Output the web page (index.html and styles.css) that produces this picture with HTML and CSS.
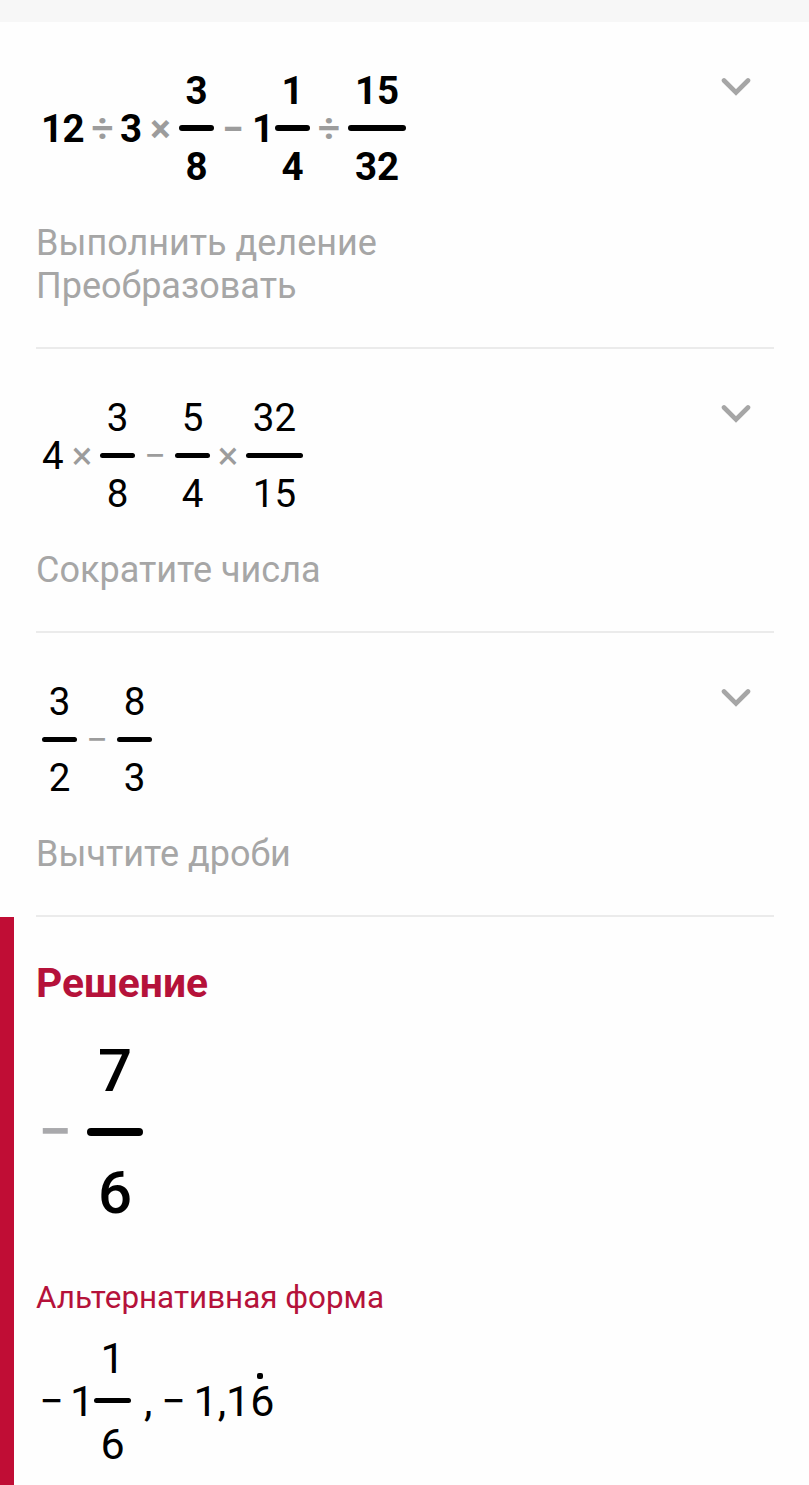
FILE: index.html
```html
<!DOCTYPE html>
<html lang="ru">
<head>
    <meta charset="UTF-8">
    <title>Решение</title>
    <link rel="stylesheet" href="styles.css">
</head>
<body>
    <div class="top-bar"></div>
    <div class="steps">
        <div class="step">
            <div class="step-head">
                <div class="math bold">
                    <span class="num first">12</span>
                    <span class="op div">÷</span>
                    <span class="num">3</span>
                    <span class="op mul">×</span>
                    <span class="frac"><span>3</span><i class="bar"></i><span>8</span></span>
                    <span class="op minus">−</span>
                    <span class="num whole">1</span>
                    <span class="frac"><span>1</span><i class="bar"></i><span>4</span></span>
                    <span class="op div wide">÷</span>
                    <span class="frac two"><span>15</span><i class="bar"></i><span>32</span></span>
                </div>
                <svg class="chevron" viewBox="0 0 30 20"><path d="M3 3.5 L15 15.5 L27 3.5"/></svg>
            </div>
            <div class="label">Выполнить деление<br>Преобразовать</div>
        </div>
        <div class="step">
            <div class="step-head">
                <div class="math">
                    <span class="num">4</span>
                    <span class="op mul">×</span>
                    <span class="frac"><span>3</span><i class="bar"></i><span>8</span></span>
                    <span class="op minus">−</span>
                    <span class="frac"><span>5</span><i class="bar"></i><span>4</span></span>
                    <span class="op mul">×</span>
                    <span class="frac two"><span>32</span><i class="bar"></i><span>15</span></span>
                </div>
                <svg class="chevron" viewBox="0 0 30 20"><path d="M3 3.5 L15 15.5 L27 3.5"/></svg>
            </div>
            <div class="label">Сократите числа</div>
        </div>
        <div class="step">
            <div class="step-head">
                <div class="math">
                    <span class="frac"><span>3</span><i class="bar"></i><span>2</span></span>
                    <span class="op minus">−</span>
                    <span class="frac"><span>8</span><i class="bar"></i><span>3</span></span>
                </div>
                <svg class="chevron" viewBox="0 0 30 20"><path d="M3 3.5 L15 15.5 L27 3.5"/></svg>
            </div>
            <div class="label">Вычтите дроби</div>
        </div>
    </div>
    <div class="solution">
        <h1>Решение</h1>
        <div class="math result">
            <span class="op minus">−</span>
            <span class="frac"><span>7</span><i class="bar"></i><span>6</span></span>
        </div>
        <h2>Альтернативная форма</h2>
        <div class="math alt">
            <span class="op minus sign">−</span>
            <span class="num whole">1</span>
            <span class="frac"><span>1</span><i class="bar"></i><span>6</span></span>
            <span class="comma">,</span>
            <span class="op minus">−</span>
            <span class="num">1,1<span class="period">6</span></span>
        </div>
    </div>
</body>
</html>
```
FILE: styles.css
```css
html, body {
    margin: 0;
    background-color: #fefefe;
    font-family: Roboto, Arial, sans-serif;
    color: #000;
}
body {
    height: 1485px;
    overflow: hidden;
}
.top-bar {
    height: 22px;
    background-color: #f7f7f7;
}
.steps {
    padding: 0 35px 0 36px;
}
.step {
    padding: 46px 0 39px;
    border-bottom: 2px solid #ebebeb;
}
.step-head {
    display: flex;
    justify-content: space-between;
    align-items: flex-start;
}
.chevron {
    width: 30px;
    height: 20px;
    margin: 9px 23px 0 0;
    fill: none;
    stroke: #a6a6a6;
    stroke-width: 4.6;
    stroke-linecap: round;
}
.label {
    margin-top: 32px;
    font-size: 36px;
    line-height: 43px;
    color: #a6a6a6;
}

/* Expressions */
.math {
    display: flex;
    align-items: center;
    padding-left: 6px;
    font-size: 38.5px;
    line-height: 46px;
}
.bold {
    font-weight: bold;
    padding-left: 5px;
}
.num {
    width: 22px;
    white-space: nowrap;
}
.num.first {
    width: 44px;
    letter-spacing: -.5px;
}
.frac {
    display: flex;
    flex-direction: column;
    align-items: center;
    width: 35px;
}
.frac.two {
    width: 57px;
}
.bar {
    width: 100%;
    height: 5px;
    margin: 12px 0 13px;
    border-radius: 3px;
    background-color: #000;
}
.bold .bar {
    height: 6px;
    margin: 11px 0 13px;
}
.bold .frac.two {
    width: 58px;
}
.op {
    color: #9c9c9c;
    text-align: center;
}
.op.div {
    width: 35px;
}
.op.div.wide {
    width: 38px;
}
.op.mul {
    width: 36px;
}
.bold .op.mul {
    width: 37px;
}
.op.minus {
    width: 40px;
}
.bold .op.minus {
    width: 38px;
}
.num.whole {
    width: 24px;
}
.bold .num.whole {
    margin-right: -1px;
}

/* Final answer */
.solution {
    height: 568px;
    box-sizing: border-box;
    border-left: 14px solid #c00d35;
    padding: 42px 0 0 22px;
}
h1, h2 {
    margin: 0;
    color: #b5123a;
}
h1 {
    font-size: 40.8px;
    line-height: 48px;
}
h2 {
    margin-top: 50px;
    font-size: 31.4px;
    line-height: 40px;
    font-weight: normal;
}
.result {
    margin-top: 29px;
    font-size: 60px;
    line-height: 70px;
    font-weight: 500;
}
.result .frac {
    width: 56px;
}
.result .bar {
    height: 8px;
    margin: 22px 0;
    border-radius: 4px;
}
.result .op.minus {
    width: 49px;
    margin-left: -4px;
    text-align: left;
    color: #a9a9ac;
}
.alt {
    margin-top: 15px;
    font-size: 43px;
    line-height: 50px;
}
.alt .op {
    color: #000;
}
.alt .op.sign {
    width: 37px;
    margin-left: -9px;
}
.alt .frac {
    width: 37px;
}
.alt .bar {
    margin: 15px 0 16px;
}
.comma {
    margin-left: 13px;
    margin-right: 1px;
}
.period {
    position: relative;
}
/* dot over the repeating digit */
.period::before {
    content: "";
    position: absolute;
    top: -3px;
    left: 7px;
    width: 6px;
    height: 6px;
    border-radius: 2px;
    background-color: #000;
}
```
